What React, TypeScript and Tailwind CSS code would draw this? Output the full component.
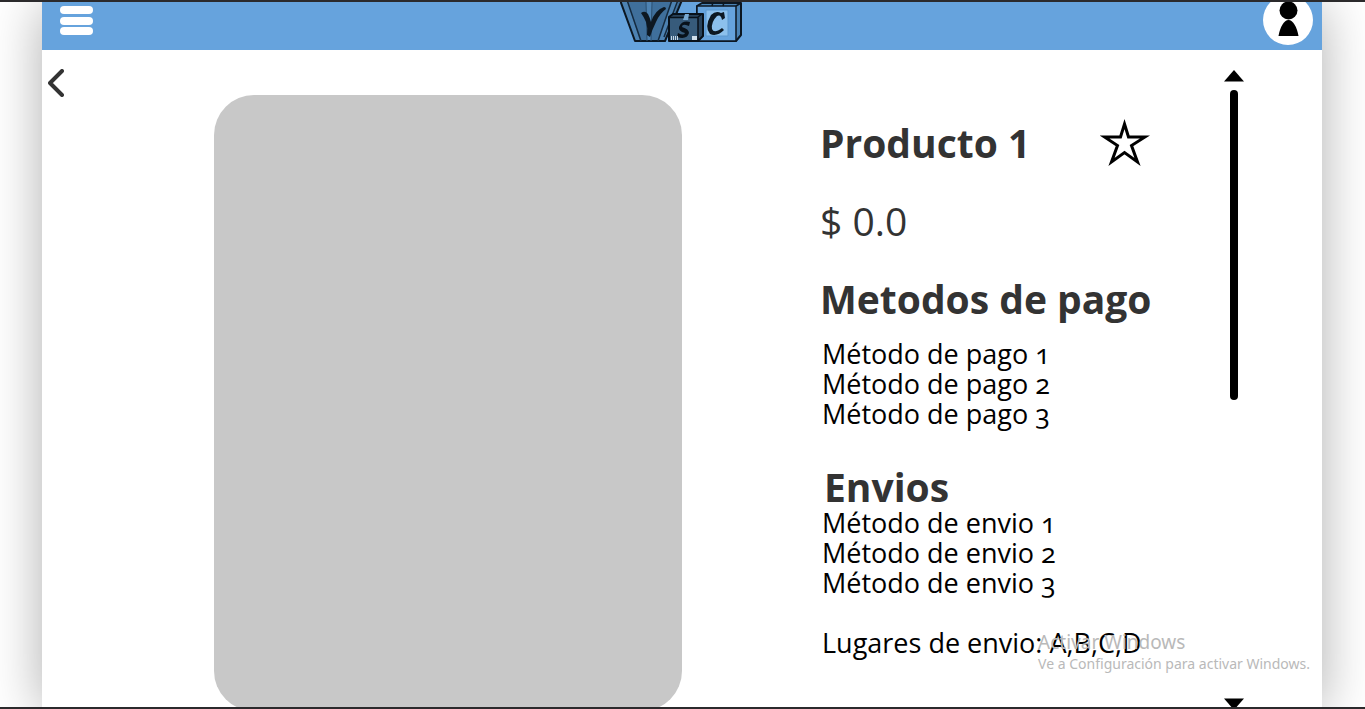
const paymentMethods = ['Método de pago 1', 'Método de pago 2', 'Método de pago 3'];
const shippingMethods = ['Método de envio 1', 'Método de envio 2', 'Método de envio 3'];

function Logo() {
  return (
    <svg viewBox="0 0 124 42" className="h-[42px] w-[124px]" role="img" aria-label="YSC" strokeLinejoin="round">
      <path d="M0 -2 L15 39 H45 L62 -2 Z" fill="#3f6f9b" />
      <path d="M0 -2 L15 39 H20 L7 -2 Z M52 -2 H59 L46 36 L44 39 H38 Z" fill="#4d82b2" />
      <path d="M26 0 H32 L31 39 H27 Z" fill="#4d82b2" />
      <path d="M0 -2 L15 39 H45 L62 -2" fill="none" stroke="#0c1722" strokeWidth="2" />
      <path d="M7 -2 L21 39 M52 -2 L38 39 M58 -2 L44 35" fill="none" stroke="#152b40" strokeWidth="1.5" />
      <path d="M26 0 L27 39 M32 0 L31 39" stroke="#2b4f70" strokeWidth="1" />
      <path d="M21 11 Q25 8 28 12 Q30 16 31 20 Q35 8 44 5 Q46 5 46 7 Q40 11 36 20 Q32 28 30 35 L27 33 Q28 26 26 20 Q24 15 21 11 Z" fill="#0d1822" />
      <path d="M77 4 L82 1 H121 V33 L116 39 H77 Z" fill="#4a82b4" stroke="#0c1722" strokeWidth="2" />
      <path d="M77 4 H116 V39 H77 Z" fill="#66a3dd" stroke="#0c1722" strokeWidth="1.5" />
      <path d="M93 0 L92 4 M104 0 L103 4 M116 4 L121 1" stroke="#0c1722" strokeWidth="1.5" />
      <rect x="86" y="8" width="22" height="26" fill="#8cc0ec" stroke="#5c98ce" strokeWidth="1" />
      <path d="M104 10 L105 16 L102 18 Q101 12 97 14 Q91 20 92 27 Q94 32 102 26 L104 28 Q97 35 90 32 Q84 25 91 13 Q96 8 101 11 Z" fill="#0d1822" />
      <path d="M49 15 L53 12 H83 V34 L78 39 H49 Z" fill="#28435c" stroke="#08111a" strokeWidth="2" />
      <path d="M50 16 H78 V38 H50 Z" fill="#375b7b" />
      <path d="M50 15.500 H78 V39 M78 15 L82 12" fill="none" stroke="#08111a" strokeWidth="1.5" />
      <path d="M65 12 H69 L68 18 H63 Z" fill="#78aad4" />
      <path d="M70 20 L69 24 L66 23 Q62 22 62 25 Q69 27 69 31 Q67 38 57 35 L58 31 Q64 34 65 31 Q58 29 59 25 Q62 18 70 20 Z" fill="#08111a" />
      <path d="M51.500 34 V38 M53.500 34 V38 M55.500 34 V38 M57.500 34 V38" stroke="#c5d6e4" strokeWidth="1" />
      <rect x="72" y="34" width="5" height="4" fill="#d0dfeb" />
    </svg>
  );
}

function Header() {
  return (
    <header className="grid h-12 shrink-0 grid-cols-3 bg-[#66a3dd]">
      <button type="button" aria-label="Menú" className="ml-[18px] mt-1 flex h-[29px] w-[33px] flex-col justify-between self-start">
        <span className="h-2 w-full rounded-full bg-white" />
        <span className="h-2 w-full rounded-full bg-white" />
        <span className="h-2 w-full rounded-full bg-white" />
      </button>
      <a href="#inicio" aria-label="Inicio" className="justify-self-center self-start">
        <Logo />
      </a>
      <button type="button" aria-label="Perfil" className="mr-[9px] justify-self-end self-start">
        <svg viewBox="0 0 50 43" className="h-[43px] w-[50px]" aria-hidden="true">
          <circle cx="25" cy="18" r="25" fill="#fff" />
          <circle cx="25.500" cy="8.500" r="9" fill="#000" />
          <path d="M15.500 34 C17 25 21 18 25.500 18 C30 18 34 25 35.500 34 Z" fill="#000" />
        </svg>
      </button>
    </header>
  );
}

function TextList({ items }: { items: string[] }) {
  return (
    <ul className="pl-0.5 text-[27px] leading-[30px] oldstyle-nums text-black">
      {items.map((item) => (
        <li key={item}>{item}</li>
      ))}
    </ul>
  );
}

function ScrollRail() {
  return (
    <div className="mr-[78px] flex w-5 flex-col items-center pt-5">
      <button type="button" aria-label="Subir">
        <svg viewBox="0 0 20 12" className="h-3 w-5" aria-hidden="true">
          <path d="M10 0 L20 11.500 H0 Z" />
        </svg>
      </button>
      <div className="mt-2 h-[310px] w-2 rounded-full bg-black" />
      <button type="button" aria-label="Bajar" className="-mb-0.5 mt-auto">
        <svg viewBox="0 0 20 11" className="h-[11px] w-5" aria-hidden="true">
          <path d="M0 0.500 H20 L10 12 Z" />
        </svg>
      </button>
    </div>
  );
}

export default function App() {
  return (
    <div className="relative flex h-screen flex-col overflow-hidden border-y-2 border-[#2b2a2c] bg-white pl-[42px] pr-[43px] font-['Open_Sans','Noto_Sans',sans-serif]">
      <div className="flex min-h-0 flex-1 flex-col bg-white shadow-[0_4px_50px_rgba(0,0,0,0.32)]">
        <Header />
        <main className="flex min-h-0 flex-1">
          <div className="w-[172px] shrink-0 pl-1.5 pt-[19px]">
            <button type="button" aria-label="Volver" className="block">
              <svg viewBox="0 0 16 28" className="h-7 w-4" aria-hidden="true">
                <path d="M14 2 L2 14 L14 26" fill="none" stroke="#333" strokeWidth="4" strokeLinecap="round" strokeLinejoin="round" />
              </svg>
            </button>
          </div>
          <div role="img" aria-label="Imagen del producto" className="mt-[45px] h-[616px] w-[468px] shrink-0 rounded-[40px] bg-[#c8c8c8]" />
          <section className="ml-[138px] flex-1 pt-[66px] text-[#333]">
            <div className="flex w-[330px] items-center justify-between">
              <h1 className="text-[39px] font-bold leading-[54px]">Producto 1</h1>
              <button type="button" aria-label="Agregar a favoritos">
                <svg viewBox="0 0 50 50" className="size-[50px]" aria-hidden="true">
                  <path
                    d="M24.500 6 L28.500 19 H45 L31.500 27.500 L37.500 44 L24.500 34.500 L11.500 44 L17.500 27.500 L4.500 19 H20.500 Z"
                    fill="none"
                    stroke="#000"
                    strokeWidth="3"
                    strokeMiterlimit="10"
                  />
                </svg>
              </button>
            </div>
            <p className="mt-6 text-[39px] leading-[54px]">$ 0.0</p>
            <h2 className="mt-6 text-[39px] font-bold leading-[54px]">Metodos de pago</h2>
            <div className="mt-[13px]">
              <TextList items={paymentMethods} />
            </div>
            <h2 className="mt-[31px] pl-1 text-[39px] font-bold leading-[54px]">Envios</h2>
            <div className="-mt-1.5">
              <TextList items={shippingMethods} />
            </div>
            <div className="mt-[30px]">
              <TextList items={['Lugares de envio: A,B,C,D']} />
            </div>
          </section>
          <ScrollRail />
        </main>
      </div>
      <aside className="pointer-events-none absolute bottom-[33px] right-[55px] font-['Noto_Sans',sans-serif] text-[#b9b9b9]">
        <p className="text-[19px] leading-6">Activar Windows</p>
        <p className="text-sm leading-5">Ve a Configuración para activar Windows.</p>
      </aside>
    </div>
  );
}
